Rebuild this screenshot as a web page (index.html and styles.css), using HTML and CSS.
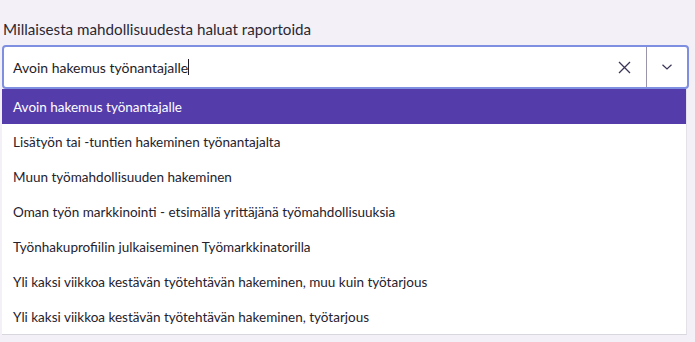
FILE: index.html
```html
<!DOCTYPE html>
<html lang="fi">
<head>
    <meta charset="UTF-8">
    <title>Raportoi mahdollisuus</title>
    <link rel="stylesheet" href="styles.css">
</head>
<body>
    <div class="field">
        <label class="field-label" for="opportunity">Millaisesta mahdollisuudesta haluat raportoida</label>

        <div class="select">
            <div class="select-control">
                <div class="select-value">
                    <span id="opportunity">Avoin hakemus työnantajalle</span><span class="caret"></span>
                </div>
                <button class="select-clear" aria-label="Tyhjennä">
                    <svg width="13" height="13" viewBox="0 0 13 13"><path d="M1 1 L12 12 M12 1 L1 12" stroke="#3c3458" stroke-width="1.3" fill="none"/></svg>
                </button>
                <span class="select-divider"></span>
                <button class="select-toggle" aria-label="Avaa">
                    <svg width="12" height="8" viewBox="0 0 12 8"><path d="M1.5 1.8 L6 6 L10.5 1.8" stroke="#3c3458" stroke-width="1.2" fill="none"/></svg>
                </button>
            </div>

            <ul class="select-menu">
                <li class="option active">Avoin hakemus työnantajalle</li>
                <li class="option">Lisätyön tai -tuntien hakeminen työnantajalta</li>
                <li class="option">Muun työmahdollisuuden hakeminen</li>
                <li class="option">Oman työn markkinointi - etsimällä yrittäjänä työmahdollisuuksia</li>
                <li class="option">Työnhakuprofiilin julkaiseminen Työmarkkinatorilla</li>
                <li class="option">Yli kaksi viikkoa kestävän työtehtävän hakeminen, muu kuin työtarjous</li>
                <li class="option">Yli kaksi viikkoa kestävän työtehtävän hakeminen, työtarjous</li>
            </ul>
        </div>
    </div>
</body>
</html>
```
FILE: styles.css
```css
/* Reset */
* {
    box-sizing: border-box;
    margin: 0;
    padding: 0;
}

body {
    font-family: Lato, "Open Sans", sans-serif;
    background-color: #f3f1f7;
    color: #26232f;
    padding: 19px 6px 0 2px;
    height: 342px;
    overflow: hidden;
}

/* Label */
.field-label {
    display: block;
    font-size: 15.2px;
    line-height: 20px;
    padding-left: 1px;
    margin-bottom: 6px;
    color: #2b2833;
}

/* Select control */
.select-control {
    display: flex;
    align-items: stretch;
    height: 44px;
    background-color: #fff;
    border: 2px solid #7e8ee0;
    border-radius: 4px;
}

.select-value {
    flex-grow: 1;
    display: flex;
    align-items: center;
    padding-left: 9px;
    font-size: 14px;
    color: #1f1c28;
}

.caret {
    display: inline-block;
    width: 1px;
    height: 16px;
    background-color: #1f1c28;
}

.select-clear,
.select-toggle {
    border: none;
    background: none;
    display: flex;
    align-items: center;
    justify-content: center;
}

.select-clear {
    width: 44px;
}

.select-divider {
    width: 1px;
    background-color: #9a94ad;
}

.select-toggle {
    width: 40px;
}

/* Menu */
.select-menu {
    list-style: none;
    background-color: #fff;
    margin-right: 2px;
    border-bottom: 1px solid #d9d7de;
    border-right: 1px solid #e4e2e8;
}

.option {
    height: 35px;
    line-height: 33px;
    padding: 2px 0 0 11px;
    font-size: 13.5px;
    color: #25222d;
    white-space: nowrap;
}

.option.active {
    background-color: #553cab;
    color: #fff;
}
```
